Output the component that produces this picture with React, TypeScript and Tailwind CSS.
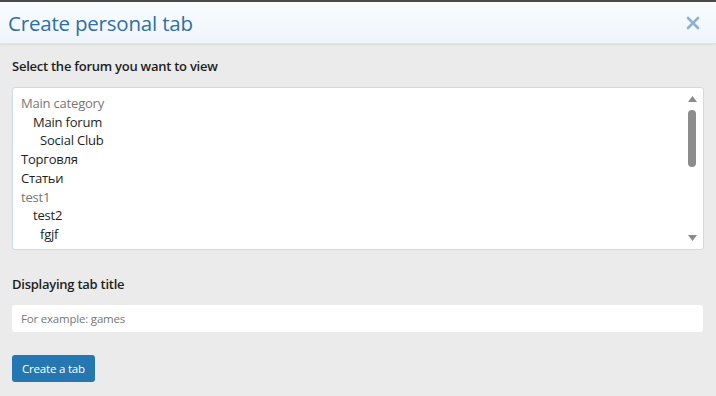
const FORUMS = [
  { label: 'Main category', indent: 0, category: true },
  { label: 'Main forum', indent: 1 },
  { label: 'Social Club', indent: 2 },
  { label: 'Торговля', indent: 0 },
  { label: 'Статьи', indent: 0 },
  { label: 'test1', indent: 0, category: true },
  { label: 'test2', indent: 1 },
  { label: 'fgjf', indent: 2 },
];

const INDENT = ['pl-2', 'pl-5', 'pl-[27px]'];

export default function App() {
  return (
    <div className="w-[716px] h-[396px] overflow-hidden bg-[#ebebeb] font-['Open_Sans',sans-serif] border-t-2 border-[#4a4a4a]">
      {/* Header */}
      <div className="h-[42px] flex items-center justify-between pl-2 pr-4 bg-gradient-to-b from-[#f9fcfe] to-[#eef5fb] border-b border-[#dde3e8] shadow-[0_1px_2px_rgba(0,0,0,0.06)]">
        <h1 className="text-[20.5px] leading-none text-[#2f6fa7] tracking-[-0.2px] pt-[2px]">Create personal tab</h1>
        <svg className="w-[14px] h-[14px]" viewBox="0 0 14 14" fill="none" stroke="#8fb1cf" strokeWidth={2.6} strokeLinecap="round">
          <path d="M2 2l10 10M12 2L2 12" />
        </svg>
      </div>

      {/* Body */}
      <div className="px-3 pt-[13px]">
        <div className="text-[13px] font-semibold text-[#1e1e1e] leading-[18px] tracking-[-0.25px]">Select the forum you want to view</div>

        <div className="mt-[12px] h-[163px] bg-white border border-[#c9dced] rounded-[3px] flex">
          <div className="flex-1 pt-[6px]">
            {FORUMS.map((f) => (
              <div
                key={f.label}
                className={`${INDENT[f.indent]} text-[13px] leading-[18.7px] tracking-[-0.2px] ${f.category ? 'text-[#777]' : 'text-[#1e1e1e]'}`}
              >
                {f.label}
              </div>
            ))}
          </div>
          <div className="w-[16px] flex flex-col items-center pt-[8px] pb-[8px] mr-[3px]">
            <svg className="w-[9px] h-[6px]" viewBox="0 0 9 6"><path d="M4.5 0L9 6H0z" fill="#8a8a8a" /></svg>
            <div className="mt-[8px] w-[8px] h-[57px] rounded-full bg-[#8c8c8c]" />
            <div className="flex-1" />
            <svg className="w-[9px] h-[6px]" viewBox="0 0 9 6"><path d="M0 0h9L4.5 6z" fill="#8a8a8a" /></svg>
          </div>
        </div>

        <div className="mt-[25px] text-[13px] font-semibold text-[#1e1e1e] leading-[18px] tracking-[-0.25px]">Displaying tab title</div>

        <div className="mt-[12px] h-[27px] bg-white rounded-[3px] flex items-center pl-[9px] mr-[1px]">
          <span className="text-[11.5px] text-[#777] tracking-[-0.2px]">For example: games</span>
        </div>

        <button className="mt-[23px] h-[27px] px-[10px] bg-[#2577b1] rounded-[3px] text-white text-[11.5px] tracking-[-0.2px]">Create a tab</button>
      </div>
    </div>
  );
}
